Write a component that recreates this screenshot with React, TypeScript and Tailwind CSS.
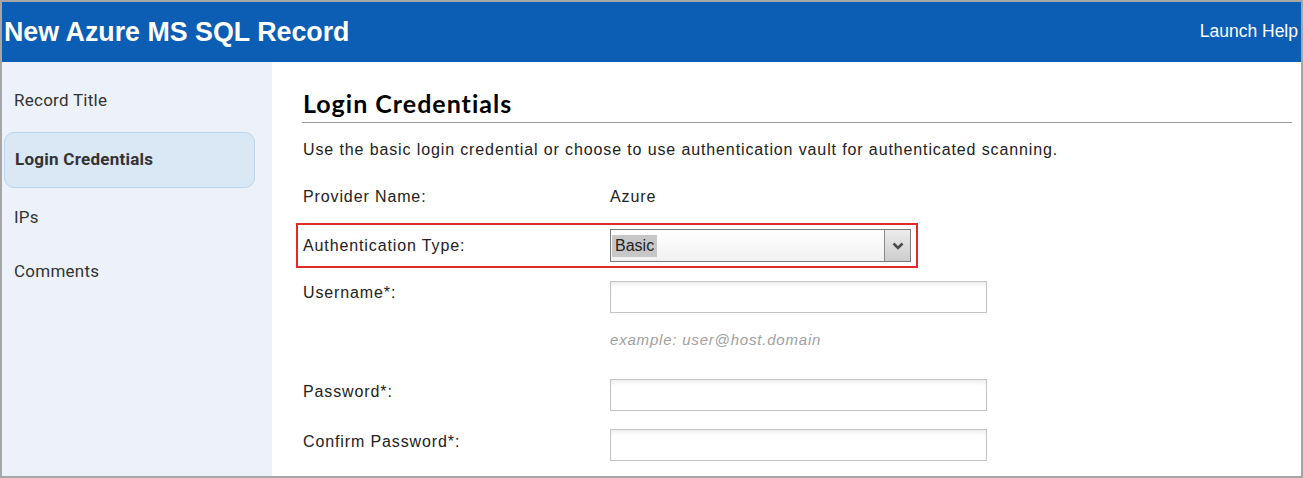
import React from 'react';

const navItems = [
  { label: 'Record Title', active: false, h: 'h-[56px]', mt: 'mt-0' },
  { label: 'Login Credentials', active: true, h: 'h-[56px]', mt: 'mt-[3px]' },
  { label: 'IPs', active: false, h: 'h-[54px]', mt: 'mt-[3px]' },
  { label: 'Comments', active: false, h: 'h-[54px]', mt: 'mt-0' },
];

const TextField = () => (
  <div className="h-[32px] w-[377px] border border-[#c4c4c4] bg-white shadow-[inset_0_4px_5px_-2px_rgba(0,0,0,0.09)]" />
);

export default function App() {
  return (
    <div className="flex h-[478px] w-[1303px] flex-col border-2 border-[#a6a6a6] bg-white font-['Liberation_Sans',Arial,sans-serif] text-[#222]">
      {/* header */}
      <div className="flex h-[60px] shrink-0 items-center justify-between bg-[#0b5eb3] pl-[2px] pr-[3px] text-white">
        <h1 className="text-[26.8px] font-bold leading-none">New Azure MS SQL Record</h1>
        <span className="text-[17.5px] leading-none">Launch Help</span>
      </div>

      <div className="flex min-h-0 flex-1">
        {/* sidebar */}
        <nav className="w-[270px] shrink-0 bg-[#edf2fa] pt-[11px] font-['Roboto',sans-serif] text-[17px] tracking-[0.25px] text-[#333]">
          {navItems.map((item) => (
            <div
              key={item.label}
              className={`${item.h} ${item.mt} ml-[2px] flex w-[251px] items-center rounded-[10px] pl-[10px] ${
                item.active ? 'border border-[#bcd5ee] bg-[#dae7f5] pl-[9px] font-bold' : ''
              }`}
            >
              {item.label}
            </div>
          ))}
        </nav>

        {/* main */}
        <main className="flex-1 pl-[31px] pr-[9px] text-[16px] tracking-[0.88px]">
          <h2 className="mt-[27px] font-['Lato',sans-serif] text-[25px] font-bold leading-[28px] tracking-[1px] text-black">
            Login Credentials
          </h2>
          <div className="-ml-px mt-[5px] h-px bg-[#999]" />
          <p className="mt-[17px] leading-[20px]">
            Use the basic login credential or choose to use authentication vault for authenticated scanning.
          </p>

          <div className="mt-[23px] flex h-[28px] items-center">
            <span className="w-[307px]">Provider Name:</span>
            <span>Azure</span>
          </div>

          <div className="-ml-[7px] mt-[12px] flex h-[45px] w-[622px] items-center border-2 border-[#e32a2a] pl-[5px]">
            <span className="w-[307px]">Authentication Type:</span>
            <div className="flex h-[33px] w-[301px] border border-[#7a7a7a] bg-gradient-to-b from-white to-[#f1f1f1]">
              <div className="flex flex-1 items-center pl-[1px]">
                <span className="bg-[#c7c7c7] px-[3px] leading-[22px] tracking-normal">Basic</span>
              </div>
              <div className="flex w-[26px] items-center justify-center border-l border-[#8a8a8a] bg-gradient-to-b from-[#ececec] to-[#cdcdcd]">
                <svg width="12" height="8" viewBox="0 0 12 8">
                  <path d="M1.5 1.5 L6 6 L10.5 1.5" fill="none" stroke="#4a4a4a" strokeWidth="2.6" />
                </svg>
              </div>
            </div>
          </div>

          <div className="mt-[13px] flex items-start">
            <span className="w-[307px] pt-[2px] leading-[20px]">Username*:</span>
            <TextField />
          </div>
          <div className="ml-[307px] mt-[17px] text-[15px] italic leading-[20px] tracking-[0.8px] text-[#a0a0a0]">
            example: user@host.domain
          </div>

          <div className="mt-[29px] flex items-start">
            <span className="w-[307px] pt-[3px] leading-[20px]">Password*:</span>
            <TextField />
          </div>
          <div className="mt-[18px] flex items-start">
            <span className="w-[307px] pt-[3px] leading-[20px]">Confirm Password*:</span>
            <TextField />
          </div>
        </main>
      </div>
    </div>
  );
}
